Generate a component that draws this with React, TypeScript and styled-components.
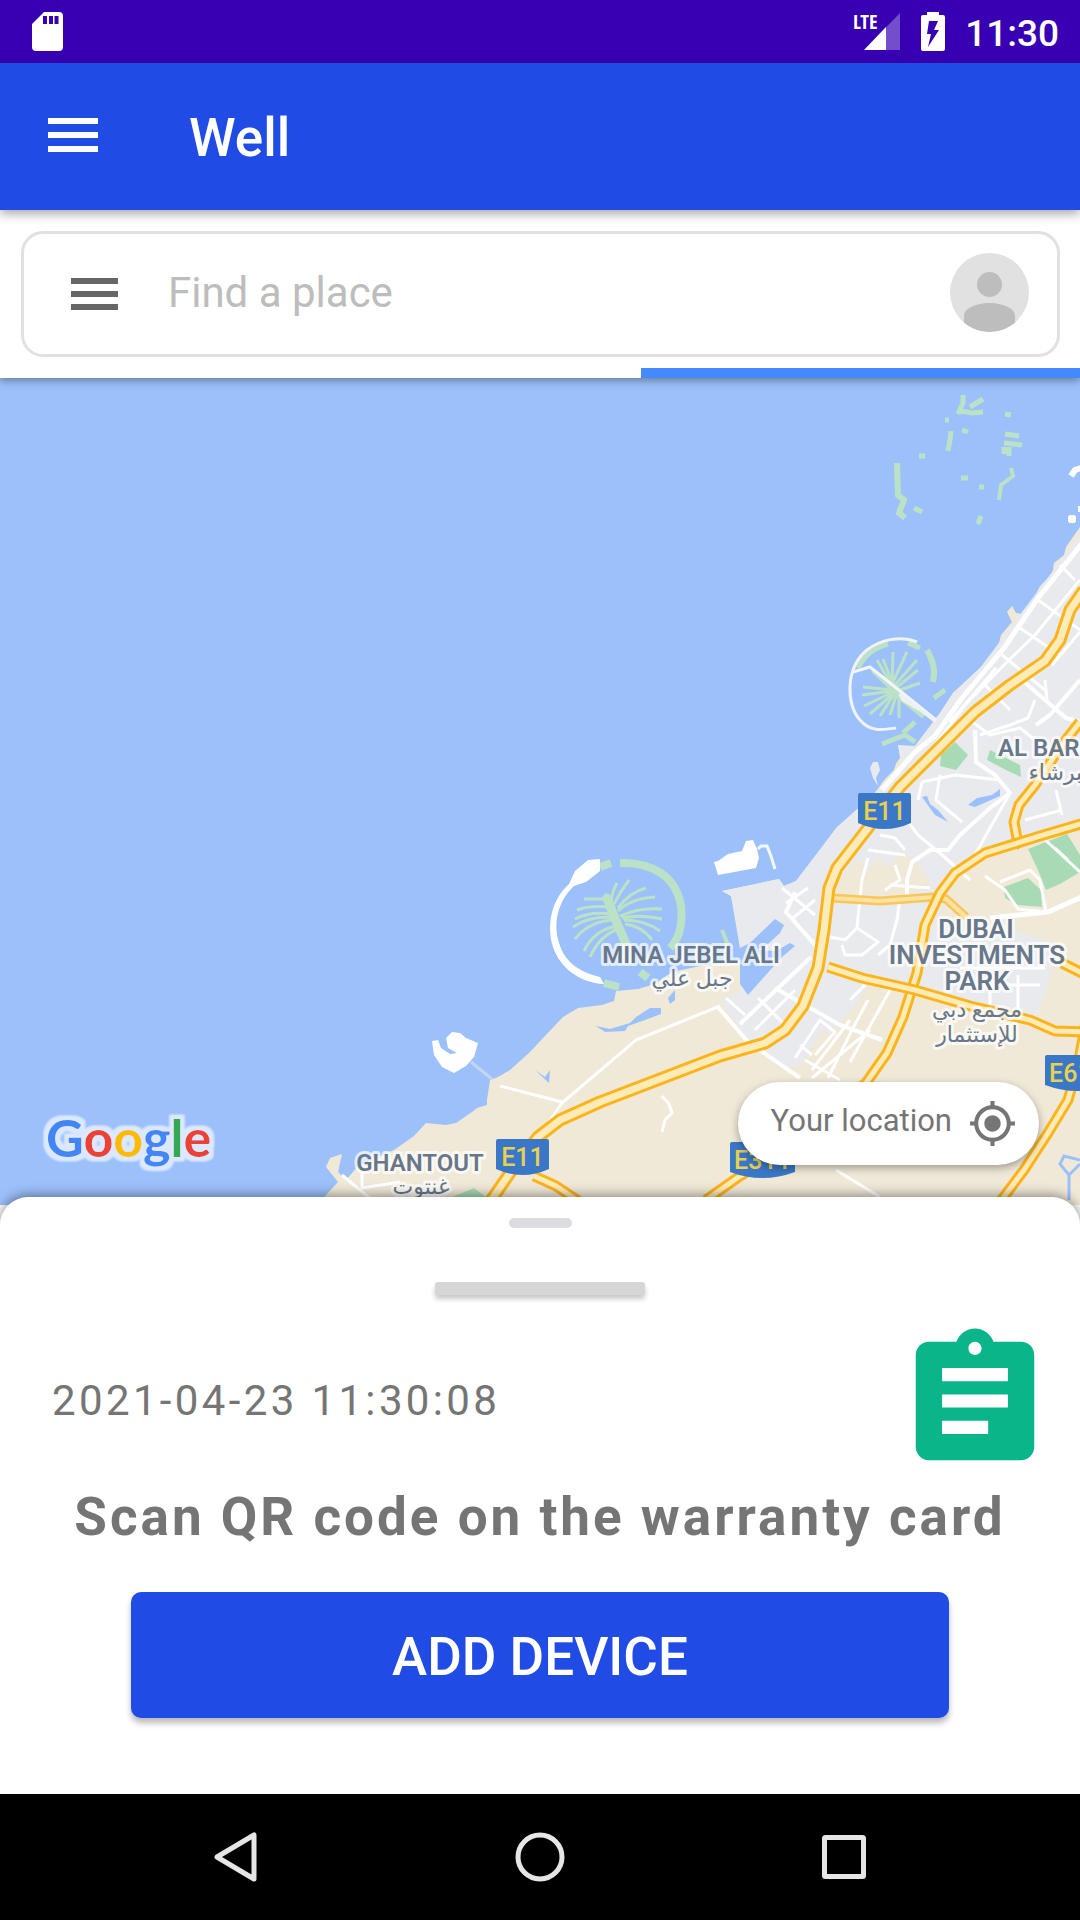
import React from "react";
import styled, { createGlobalStyle } from "styled-components";

const colors = {
  status: "#3700b3",
  primary: "#214be5",
  accent: "#448aff",
  text: "#757575",
  hint: "#bdbdbd",
  green: "#0bb58a",
  water: "#9cc0fa",
  land: "#f0e9d8",
  urban: "#e8eaee",
  island: "#bbe2c6",
  park: "#a8dab5",
};

const GlobalStyle = createGlobalStyle`
  *, *::before, *::after { box-sizing: border-box; }
  body { margin: 0; background: #fff; font-family: Roboto, "DejaVu Sans", sans-serif; }
  button, input { font: inherit; border: 0; padding: 0; background: none; color: inherit; }
  svg { display: block; }
`;

const Screen = styled.div`
  display: flex;
  flex-direction: column;
  min-height: 100vh;
`;

const StatusBar = styled.header`
  display: flex;
  align-items: center;
  height: 63px;
  padding: 0 21px 0 32px;
  background: ${colors.status};
  color: #fff;
`;

const StatusIcons = styled.div`
  display: flex;
  align-items: center;
  gap: 20px;
  margin-left: auto;
`;

const Clock = styled.time`
  font-size: 37px;
  font-weight: 500;
  line-height: 44px;
  padding-top: 4px;
`;

const AppBar = styled.nav`
  position: relative;
  z-index: 3;
  display: flex;
  align-items: center;
  gap: 84px;
  height: 147px;
  padding: 0 41px 4px;
  background: ${colors.primary};
  color: #fff;
  box-shadow: 0 4px 10px rgba(0, 0, 0, 0.34);
`;

const IconButton = styled.button`
  display: grid;
  place-items: center;
  flex: none;
  width: 64px;
  height: 64px;
  cursor: pointer;
`;

const AppTitle = styled.h1`
  margin: 0;
  font-size: 53px;
  font-weight: 500;
  line-height: 62px;
  padding-top: 6px;
`;

const SearchPanel = styled.section`
  position: relative;
  z-index: 2;
  padding-top: 21px;
  background: #fff;
  box-shadow: 0 3px 8px rgba(0, 0, 0, 0.34);
`;

const SearchForm = styled.form`
  display: flex;
  align-items: center;
  gap: 42px;
  height: 126px;
  margin: 0 20px 11px 21px;
  padding: 0 28px 4px 38px;
  border: 3px solid #e1e1e1;
  border-radius: 22px;
`;

const SearchMenuButton = styled(IconButton)`
  padding-top: 4px;
  color: #666;
`;

const SearchInput = styled.input`
  flex: 1;
  min-width: 0;
  height: 64px;
  font-size: 42px;
  line-height: 50px;
  color: #424242;
  outline: none;
  &::placeholder {
    color: ${colors.hint};
    opacity: 1;
  }
`;

const AvatarButton = styled(IconButton)`
  width: 79px;
  height: 79px;
`;

const ProgressTrack = styled.div`
  display: flex;
  justify-content: flex-end;
  height: 10px;
`;

const ProgressFill = styled.div`
  background: ${colors.accent};
`;

const MapArea = styled.main`
  position: relative;
  flex: 1;
  min-height: 420px;
  overflow: hidden;
  background: ${colors.water};
`;

const MapCanvas = styled.div`
  position: absolute;
  inset: 0;
  svg {
    width: 100%;
    height: 100%;
  }
`;

const LocationButton = styled.button`
  position: absolute;
  right: 41px;
  bottom: 40px;
  display: flex;
  align-items: center;
  gap: 16px;
  height: 83px;
  padding: 0 22px 0 33px;
  border-radius: 42px;
  background: #fff;
  color: ${colors.text};
  font-size: 31px;
  line-height: 36px;
  box-shadow: 0 3px 9px rgba(0, 0, 0, 0.34);
  cursor: pointer;
`;

const LocationText = styled.span`
  padding-bottom: 5px;
`;

const Sheet = styled.section`
  position: relative;
  z-index: 1;
  display: flex;
  flex-direction: column;
  align-items: center;
  margin-top: -8px;
  padding: 21px 40px 76px;
  border-radius: 28px 28px 0 0;
  background: #fff;
  box-shadow: 0 -2px 12px rgba(0, 0, 0, 0.42);
`;

const Grip = styled.span`
  width: 63px;
  height: 10px;
  border-radius: 5px;
  background: #dadce0;
`;

const DragBar = styled.span`
  width: 210px;
  height: 13px;
  margin-top: 54px;
  border-radius: 3px;
  background: #d6d6d6;
  box-shadow: 0 4px 5px rgba(0, 0, 0, 0.22);
`;

const InfoRow = styled.div`
  display: flex;
  align-items: center;
  justify-content: space-between;
  align-self: stretch;
  height: 158px;
  margin-top: 27px;
  padding-left: 12px;
  margin-right: -14px;
`;

const Stamp = styled.time`
  color: ${colors.text};
  font-size: 42px;
  line-height: 50px;
  letter-spacing: 0.08em;
`;

const Prompt = styled.h2`
  margin: 6px 0 0;
  color: ${colors.text};
  font-size: 53px;
  font-weight: 700;
  line-height: 62px;
  letter-spacing: 3px;
  text-align: center;
`;

const AddButton = styled.button`
  width: 100%;
  max-width: 818px;
  height: 126px;
  margin-top: 44px;
  padding-top: 4px;
  border-radius: 10px;
  background: ${colors.primary};
  color: #fff;
  font-size: 53px;
  font-weight: 500;
  line-height: 62px;
  box-shadow: 0 5px 6px rgba(0, 0, 0, 0.28);
  cursor: pointer;
`;

const SystemNav = styled.footer`
  display: flex;
  align-items: center;
  justify-content: center;
  gap: 240px;
  height: 126px;
  background: #000;
  color: #e6e6e6;
`;

function SdCardIcon() {
  return (
    <svg width="31" height="39" viewBox="0 0 31 39" aria-hidden="true">
      <path
        fillRule="evenodd"
        fill="#fff"
        d="M12 0H27Q31 0 31 4V35Q31 39 27 39H4Q0 39 0 35V12ZM11 4V12H15V4ZM17 4V12H21V4ZM22.500 4V12H26.500V4Z"
      />
    </svg>
  );
}

function SignalIcon() {
  return (
    <svg width="46" height="38" viewBox="0 0 46 38" overflow="visible" aria-label="LTE signal">
      <path d="M45 0V37H9Z" fill="#fff" opacity=".3" />
      <path d="M31 14V37H9Z" fill="#fff" />
      <text x="-2" y="16" fill="#fff" fontSize="20" fontWeight="700" fontFamily="Open Sans Condensed, Liberation Sans Narrow, Roboto, sans-serif">
        LTE
      </text>
    </svg>
  );
}

function BatteryIcon() {
  return (
    <svg width="24" height="39" viewBox="0 0 24 39" aria-label="Charging">
      <path
        fillRule="evenodd"
        fill="#fff"
        d="M6 3V0H18V3H22Q24 3 24 5V37Q24 39 22 39H2Q0 39 0 37V5Q0 3 2 3ZM8 9L6 22H10L7 35L18 18H13L17 9Z"
      />
    </svg>
  );
}

function MenuIcon({ width, bar, step }: { width: number; bar: number; step: number }) {
  const height = step * 2 + bar;
  return (
    <svg width={width} height={height} viewBox={`0 0 ${width} ${height}`} aria-hidden="true">
      {[0, 1, 2].map((i) => (
        <rect key={i} y={i * step} width={width} height={bar} fill="currentColor" />
      ))}
    </svg>
  );
}

function AvatarIcon() {
  return (
    <svg width="79" height="79" viewBox="0 0 79 79" aria-hidden="true">
      <clipPath id="avatar">
        <circle cx="39.500" cy="39.500" r="39.500" />
      </clipPath>
      <g clipPath="url(#avatar)">
        <rect width="79" height="79" fill="#e1e1e1" />
        <circle cx="39.500" cy="31.500" r="12.500" fill="#bdbdbd" />
        <path d="M14 79V63C14 55 27 50 39.500 50S65 55 65 63V79Z" fill="#bdbdbd" />
      </g>
    </svg>
  );
}

function TargetIcon() {
  return (
    <svg width="49" height="49" viewBox="0 0 24 24" aria-hidden="true">
      <path
        fill="currentColor"
        d="M12 8c-2.210 0-4 1.790-4 4s1.790 4 4 4 4-1.790 4-4-1.790-4-4-4zm8.940 3c-.46-4.170-3.770-7.480-7.940-7.940V1h-2v2.060C6.830 3.520 3.520 6.830 3.060 11H1v2h2.060c.46 4.170 3.770 7.480 7.940 7.940V23h2v-2.060c4.170-.46 7.480-3.770 7.940-7.940H23v-2h-2.060zM12 19c-3.870 0-7-3.130-7-7s3.130-7 7-7 7 3.130 7 7-3.130 7-7 7z"
      />
    </svg>
  );
}

function AssignmentIcon() {
  return (
    <svg width="158" height="158" viewBox="0 0 24 24" aria-hidden="true">
      <path
        fill={colors.green}
        d="M19 3h-4.180C14.400 1.840 13.300 1 12 1c-1.300 0-2.400.84-2.820 2H5c-1.100 0-2 .9-2 2v14c0 1.100.9 2 2 2h14c1.100 0 2-.9 2-2V5c0-1.100-.9-2-2-2zm-7 0c.55 0 1 .45 1 1s-.45 1-1 1-1-.45-1-1 .45-1 1-1zm2 14H7v-2h7v2zm3-4H7v-2h10v2zm0-4H7V7h10v2z"
      />
    </svg>
  );
}

const highways = [
  "M1080 722L1062 745L1035 785L1019 805L1014 822L1017 838L1022 847",
  "M1084 823L1040 836L985 853L955 873L940 893L925 925L917 973L903 1017L887 1053L866 1083L800 1140L740 1176L706 1200",
  "M1090 1000L1078 1065L1068 1100L1048 1133L1024 1170L1000 1202",
  "M828 967L862 978L915 990L970 1006L1030 1020L1055 1031L1084 1032",
  "M534 1176L556 1186L580 1202M1062 963L1084 974",
];

const mainHighway =
  "M1084 590L1070 610L1060 640L1045 661L1010 685L975 712L945 742L900 787L868 828L837 868L829 888L824 930L818 968L803 1006L785 1030L765 1043L720 1056L660 1079L600 1102L560 1120L538 1137L512 1170L490 1202";

function Highway({ d, width = 11 }: { d: string; width?: number }) {
  return (
    <g fill="none" strokeLinejoin="round">
      <path d={d} stroke="#fab41c" strokeWidth={width} />
      <path d={d} stroke="#ffebb8" strokeWidth={width - 6} />
    </g>
  );
}

function Shield({ x, y, width, label }: { x: number; y: number; width: number; label: string }) {
  return (
    <g>
      <path
        d={`M${x} ${y + 2}Q${x} ${y} ${x + 2} ${y}H${x + width - 2}Q${x + width} ${y} ${x + width} ${y + 2}V${y + 30}Q${x + width / 2} ${y + 42} ${x} ${y + 30}Z`}
        fill="#3a78c7"
      />
      <text x={x + width / 2} y={y + 27} textAnchor="middle" fontSize="25" fontWeight="500" fill="#e8d150">
        {label}
      </text>
    </g>
  );
}

type MapLabelProps = { x: number; y: number; size?: number; weight?: number; start?: boolean; children: string };

function MapLabel({ x, y, size = 24, weight = 600, start, children }: MapLabelProps) {
  return (
    <text
      x={x}
      y={y}
      fontSize={size}
      fontWeight={weight}
      textAnchor={start ? "start" : "middle"}
      fill="#687789"
      stroke="#fff"
      strokeOpacity=".7"
      strokeWidth="6"
      strokeLinejoin="round"
      paintOrder="stroke"
    >
      {children}
    </text>
  );
}

function CityMap() {
  return (
    <svg viewBox="0 378 1080 827" preserveAspectRatio="xMaxYMax slice" role="img" aria-label="Map of the Dubai coast">
      <defs>
        <filter id="halo" x="-10%" y="-20%" width="120%" height="140%">
          <feMorphology in="SourceAlpha" operator="dilate" radius="4" result="wide" />
          <feGaussianBlur in="wide" stdDeviation="1" result="soft" />
          <feFlood floodColor="#dbe8fd" />
          <feComposite in2="soft" operator="in" result="glow" />
          <feMerge>
            <feMergeNode in="glow" />
            <feMergeNode in="glow" />
            <feMergeNode in="SourceGraphic" />
          </feMerge>
        </filter>
      </defs>
      <rect y="378" width="1080" height="827" fill={colors.water} />
      {/* Mainland */}
      <path
        fill={colors.land}
        d="M1080 527L1066 547L1064 555L1054 563L1052 574L1040 586L1033 600L1022 614L1016 613L1012 606L1007 612L1012 622L1001 635L998 647L980 668L953 693L940 713L915 746L905 747L898 745L900 758L882 783L874 794L862 804L850 822L837 827L820 850L796 881L784 886L779 879L722 891L731 896L739 930L741 960L705 965L672 972L655 984L638 989L616 991L614 1001L602 1005L578 1008L563 1017L545 1036L530 1052L510 1070L498 1077L490 1080L487 1100L472 1112L456 1123L446 1125L426 1123L414 1136L394 1150L358 1166L346 1180L338 1172L342 1154L330 1158L326 1167L338 1182L326 1195L318 1205H1080Z"
      />
      {/* Built-up area */}
      <path
        fill={colors.urban}
        d="M1080 535L1001 640L980 668L953 693L940 713L915 746L898 745L903 765L874 794L837 827L796 881L784 886L779 879L722 891L731 896L742 960L740 992L720 1000L748 1040L783 1066L800 1066L822 1030L842 1045L857 1008L872 985L912 990L975 1006L1035 1022L1048 985L1056 945L1000 925L940 920L945 888L980 858L1020 845L1080 828Z"
      />
      <path fill={colors.urban} d="M870 768L873 762L878 762L880 770L876 778L878 786L873 778Z" />
      <g fill={colors.land}>
        <path d="M833 894L840 880L858 858L868 870L880 858L889 868L901 850L920 866L931 884L920 891L900 896Z" />
        <path d="M945 895L982 862L1025 848L1080 860V940L1020 932L975 925L955 915Z" />
        <path d="M822 1040L842 1020L858 1002L868 984L900 990L895 1030L870 1080H790L808 1060Z" />
      </g>
      {/* Water inside the port and lagoons */}
      <g fill={colors.water}>
        <path d="M740 948L750 943L775 919L784 925L780 933L768 944L758 950L776 951L790 943L795 946L782 957L748 995L740 984Z" />
        <path d="M596 1026L610 1029L630 1023L636 1017L650 1008L661 1008L661 1014L645 1020L628 1026L625 1031L605 1032Z" />
        <path d="M668 998L675 990V1000L670 1004Z" />
        <path d="M535 1070L545 1077L550 1070L549 1083Z" />
        <path d="M922 797L927 796L930 804L938 810L948 822L935 815ZM968 805L977 798L992 795L1000 789V796L975 807ZM886 767L898 757L894 770L884 780Z" />
        <path d="M474 1092L487 1086V1105L473 1109Z" />
      </g>
      {/* Parks */}
      <g fill={colors.park}>
        <path d="M955 742L968 755L956 770L940 766L941 755Z" />
        <path d="M990 750L1020 765L1021 777L1008 771L987 760Z" />
        <path d="M1028 849L1067 834L1080 855V872L1060 884L1046 890L1038 870Z" />
        <path d="M1004 887L1028 878L1041 890L1042 907L1018 905L1005 898Z" />
        <path d="M452 1197L474 1188L486 1197Z" />
      </g>
      {/* Local streets */}
      <g fill="none" stroke="#fff" strokeWidth="3" strokeLinejoin="round">
        <path strokeWidth="5" d="M1084 541L1038 598L1004 648L962 698L935 736L915 752L882 790" />
        <path d="M1080 580L1035 635L1004 665L965 705L935 745M1080 632L1052 665M1038 600L1080 630M1020 628L1060 655M1002 655L1045 690M985 685L1010 710M1060 565L1075 580M996 668L950 722" />
        <path strokeWidth="4" d="M1022 680L1045 700L1066 718L1080 722M1080 680L1050 715L1036 725M975 730L976 762L995 775L1010 793L990 808L960 835L948 850L930 850L912 862L907 880V898" />
        <path d="M1045 680L1047 700M1035 700L1028 718L1010 725L980 735M903 815L918 835L960 870M918 800L922 782L955 775L1000 780M940 775L936 800L962 822M1010 793L990 828L975 855M970 720L990 735L1020 728L1035 740M1056 790L1062 815M1025 820L1062 810M868 850L905 855M880 835L895 838L905 850" />
        <path d="M945 858L970 880M868 858L862 880L860 897L857 928L845 940L830 937M857 928L878 942L862 955L845 955L842 945M900 897L897 920L890 945L878 955M895 865L900 880L885 890M890 885L930 888M985 876L1005 890L1018 909L1046 912M1000 882L1030 870L1040 880L1046 912M1040 835L1080 872M1055 848L1068 860" />
        <path strokeWidth="5" d="M990 918L1048 912L1084 896" />
        <path d="M960 968H1045M965 985H1040M990 975V1008M1018 975V1015" />
        <path strokeWidth="4" d="M718 1007L748 1042L800 1078M740 1024L811 957M795 892L786 912L815 945M775 988L840 1025L882 1040" />
        <path d="M726 998L745 1015M755 1030L795 990M786 903L808 888M793 918L815 900M758 998L785 1025M782 888L815 915M795 1058L820 1020L835 1032L815 1055M812 1055L800 1045M850 1020L812 1070M865 985L850 1000M868 1000L852 1030L828 1078M890 990L850 1062M805 1060L840 1080M812 1078L870 1030" />
        <path d="M720 1006L636 1040L562 1103L543 1130M500 1086L535 1095L562 1102M342 1175L372 1200M362 1172V1188L400 1182M662 1096L669 1104L672 1113L665 1120L662 1132M836 1170L880 1197" />
        <path stroke="#c4d5f2" d="M471 1062L492 1079" />
      </g>
      <path d="M832 898L880 901L934 897L946 899L966 917" fill="none" stroke="#f8c75c" strokeWidth="9" />
      <path d="M832 898L880 901L934 897L946 899L966 917" fill="none" stroke="#ffe2a0" strokeWidth="4" />
      {highways.map((d) => (
        <Highway key={d} d={d} />
      ))}
      <Highway d={mainHighway} width={13} />
      <path d="M1069 1200V1175L1060 1164L1064 1156L1080 1160M1069 1175L1080 1164" fill="none" stroke={colors.water} strokeWidth="3" />

      {/* The World islands */}
      <g fill="none" stroke={colors.island} strokeWidth="5">
        <path d="M963 395V403L958 414M970 407L983 399M961 411L972 413L983 412M945 420H949M951 431L950 440L948 451M962 430L968 432M1005 414L1011 415M1005 434L1019 436M1004 443L1022 445M1004 447V454M1009 447V456M919 456H925M961 478H968M914 508L922 512M981 516L978 524M979 487H984" />
        <path strokeWidth="4" d="M1011 468L1013 476L1001 485L999 500" />
        <path strokeWidth="6" d="M897 463L898 495L904 500L899 513L905 518" />
      </g>
      <path d="M1071 476L1075 470L1084 467M1068 519H1076M1072 515V523M1078 509H1084" fill="none" stroke="#fff" strokeWidth="6" />

      {/* Palm Jumeirah */}
      <g fill="none" stroke={colors.island} strokeWidth="3">
        <path strokeWidth="6" d="M927 650C935 665 935 672 933 682" />
        <path strokeWidth="5" d="M858 668C865 654 876 647 888 644M908 643L920 648M882 744L905 735L915 742M903 733L915 722M934 698L945 690" />
        <path d="M895 692L872 671M893 688L877 660M892 682L883 659M892 684L893 652M892 684L907 652M894 686L917 660M896 688L918 670M900 690L920 683M893 690L863 687M893 691L862 695M893 692L864 706M894 693L870 714M894 694L880 716M896 696L890 715M899 697V718" />
        <path strokeWidth="9" d="M884 677L900 695L925 715" />
      </g>
      <path d="M917 642C900 635 880 640 867 650C845 668 846 705 860 720C870 732 882 730 896 728" fill="none" stroke="#f0f3f7" strokeWidth="3" />
      <path d="M853 672L870 667L905 695L936 720" fill="none" stroke="#f2f5f9" strokeWidth="3" />
      <path d="M900 694L936 722L925 713L903 700Z" fill="#eee" stroke="#eef0f3" strokeWidth="3" />

      {/* Palm Jebel Ali */}
      <g fill="none" stroke={colors.island} strokeWidth="3">
        <path strokeWidth="8" d="M620 863C652 862 676 876 681 906C683 925 680 938 670 948M600 867L611 863M604 983L619 987M640 972L648 978" />
        <path strokeWidth="4" d="M722 930L728 945" />
        <path d="M608 899H584M610 907Q590 905 577 910M612 914Q590 911 575 919M614 917Q588 916 573 927M616 920Q590 920 575 939M617 926Q594 930 584 951M620 928Q600 935 590 957M611 902Q612 892 617 883M614 904Q620 892 629 880M618 908Q630 892 646 888M618 911Q632 898 655 897M620 916Q640 907 662 909M622 918Q640 914 662 919M624 920Q645 920 660 931M625 924Q642 926 652 940" />
        <path strokeWidth="9" strokeLinecap="round" d="M607 898L614 916L626 944" />
      </g>
      <path fill="#fff" d="M600 859L588 860L575 871L569 884C552 899 546 924 553 947C560 968 580 983 604 984L600 977C580 972 565 963 559 943C552 920 560 899 574 886L586 882L600 871Z" />
      <path fill="#fff" d="M714 862L718 861L728 854L742 851L746 841L753 840L757 849L759 858L756 868L718 875Z" />
      <path fill="none" stroke="#f4f7fc" strokeWidth="3" d="M758 849L761 846L767 846L771 856L775 869" />
      <path fill="#fff" d="M432 1041L438 1040L441 1048L450 1054L457 1053L448 1048L446 1038L452 1032L460 1033L466 1038L478 1043L474 1057L466 1066L454 1073L442 1067L434 1055Z" />

      <Shield x={858} y={793} width={53} label="E11" />
      <Shield x={496} y={1139} width={53} label="E11" />
      <Shield x={730} y={1142} width={65} label="E311" />
      <Shield x={1045} y={1055} width={65} label="E611" />

      <MapLabel x={691} y={963}>MINA JEBEL ALI</MapLabel>
      <MapLabel x={692} y={986} size={22} weight={400}>جبل علي</MapLabel>
      <MapLabel x={976} y={938} size={26}>DUBAI</MapLabel>
      <MapLabel x={977} y={964} size={26}>INVESTMENTS</MapLabel>
      <MapLabel x={977} y={990} size={26}>PARK</MapLabel>
      <MapLabel x={977} y={1017} size={22} weight={400}>مجمع دبي</MapLabel>
      <MapLabel x={977} y={1042} size={22} weight={400}>للإستثمار</MapLabel>
      <MapLabel x={998} y={756} start>AL BARSHA</MapLabel>
      <MapLabel x={1062} y={780} size={22} weight={400}>البرشاء</MapLabel>
      <MapLabel x={420} y={1171}>GHANTOUT</MapLabel>
      <MapLabel x={421} y={1194} size={22} weight={400}>غنتوت</MapLabel>

      <text x="46" y="1157" fontFamily="Lato, Roboto, sans-serif" fontSize="52" fontWeight="700" filter="url(#halo)">
        <tspan fill="#4285f4">G</tspan>
        <tspan fill="#ea4335">o</tspan>
        <tspan fill="#fbbc05">o</tspan>
        <tspan fill="#4285f4">g</tspan>
        <tspan fill="#34a853">l</tspan>
        <tspan fill="#ea4335">e</tspan>
      </text>
    </svg>
  );
}

export default function App() {
  const loaded = 439 / 1080;
  return (
    <Screen>
      <GlobalStyle />
      <StatusBar>
        <SdCardIcon />
        <StatusIcons>
          <SignalIcon />
          <BatteryIcon />
          <Clock>11:30</Clock>
        </StatusIcons>
      </StatusBar>
      <AppBar>
        <IconButton aria-label="Open menu">
          <MenuIcon width={50} bar={6} step={14} />
        </IconButton>
        <AppTitle>Well</AppTitle>
      </AppBar>
      <SearchPanel>
        <SearchForm onSubmit={(e) => e.preventDefault()}>
          <SearchMenuButton type="button" aria-label="Search menu">
            <MenuIcon width={47} bar={6} step={13} />
          </SearchMenuButton>
          <SearchInput type="text" placeholder="Find a place" aria-label="Find a place" />
          <AvatarButton type="button" aria-label="Account">
            <AvatarIcon />
          </AvatarButton>
        </SearchForm>
        <ProgressTrack role="progressbar" aria-label="Loading">
          <ProgressFill style={{ width: `${loaded * 100}%` }} />
        </ProgressTrack>
      </SearchPanel>
      <MapArea>
        <MapCanvas>
          <CityMap />
        </MapCanvas>
        <LocationButton>
          <LocationText>Your location</LocationText>
          <TargetIcon />
        </LocationButton>
      </MapArea>
      <Sheet>
        <Grip />
        <DragBar />
        <InfoRow>
          <Stamp>2021-04-23 11:30:08</Stamp>
          <AssignmentIcon />
        </InfoRow>
        <Prompt>Scan QR code on the warranty card</Prompt>
        <AddButton>ADD DEVICE</AddButton>
      </Sheet>
      <SystemNav>
        <IconButton aria-label="Back">
          <svg width="50" height="56" viewBox="0 0 50 56" aria-hidden="true">
            <path d="M43 6V50L6 28Z" fill="none" stroke="currentColor" strokeWidth="5" strokeLinejoin="round" />
          </svg>
        </IconButton>
        <IconButton aria-label="Home">
          <svg width="50" height="50" viewBox="0 0 50 50" aria-hidden="true">
            <circle cx="25" cy="25" r="22" fill="none" stroke="currentColor" strokeWidth="5" />
          </svg>
        </IconButton>
        <IconButton aria-label="Recent apps">
          <svg width="44" height="44" viewBox="0 0 44 44" aria-hidden="true">
            <rect x="2.500" y="2.500" width="39" height="39" rx="1" fill="none" stroke="currentColor" strokeWidth="5" />
          </svg>
        </IconButton>
      </SystemNav>
    </Screen>
  );
}
